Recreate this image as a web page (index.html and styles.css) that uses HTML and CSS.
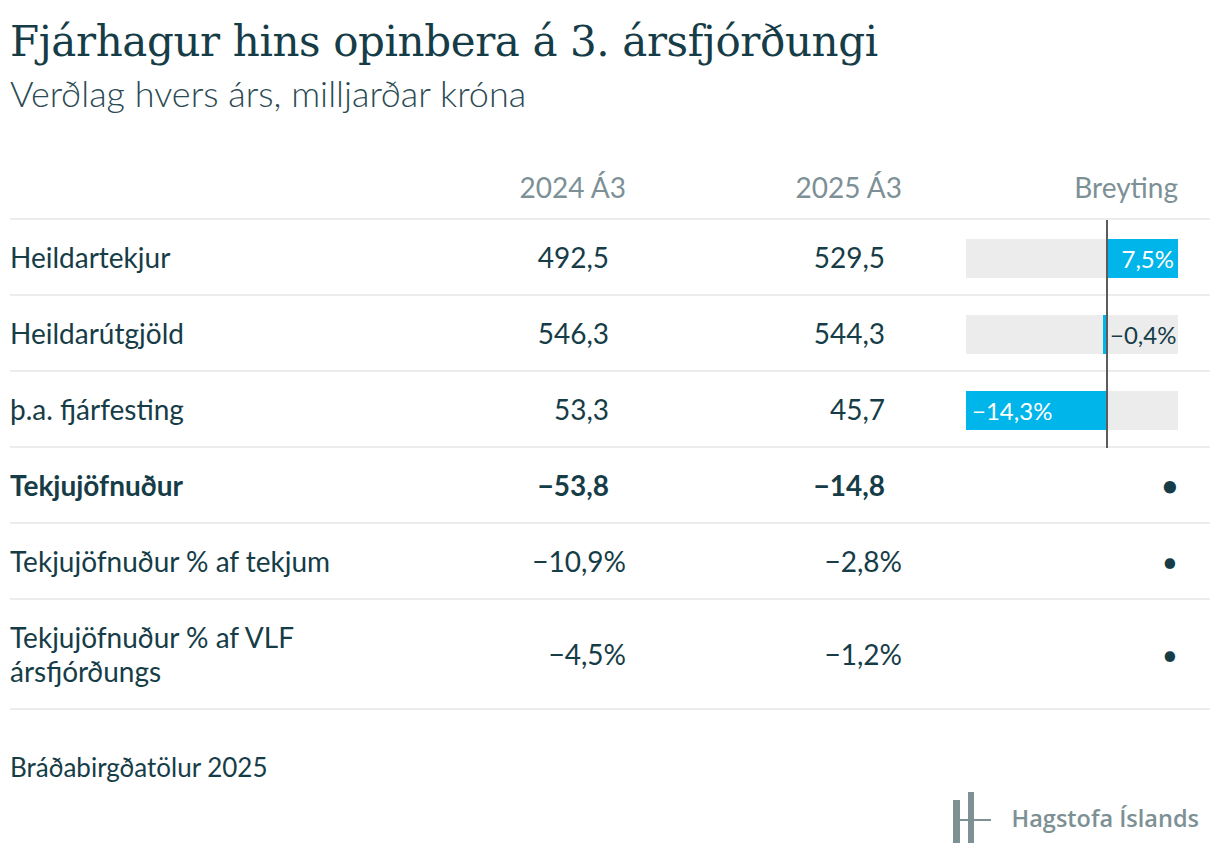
FILE: index.html
```html
<!DOCTYPE html>
<html lang="is">
<head>
<meta charset="utf-8">
<title>Fjárhagur hins opinbera á 3. ársfjórðungi</title>
<link rel="stylesheet" href="styles.css">
</head>
<body>
<div class="chart">
  <header class="head">
    <h1 class="title">Fjárhagur hins opinbera á 3. ársfjórðungi</h1>
    <p class="subtitle">Verðlag hvers árs, milljarðar króna</p>
  </header>

  <div class="table">
    <div class="row row-head">
      <span class="label"></span>
      <span class="num">2024 Á3</span>
      <span class="num">2025 Á3</span>
      <span class="chg">Breyting</span>
    </div>

    <div class="row">
      <span class="label">Heildartekjur</span>
      <span class="num"><span class="plain">492,5</span></span>
      <span class="num"><span class="plain">529,5</span></span>
      <div class="barcell">
        <div class="track">
          <div class="side side-neg"></div>
          <div class="side side-pos"><div class="bar bar-right" style="width:71px">7,5%</div></div>
        </div>
        <span class="axis"></span>
      </div>
    </div>

    <div class="row">
      <span class="label">Heildarútgjöld</span>
      <span class="num"><span class="plain">546,3</span></span>
      <span class="num"><span class="plain">544,3</span></span>
      <div class="barcell">
        <div class="track">
          <div class="side side-neg"><div class="bar" style="width:4px"></div></div>
          <div class="side side-pos"><span class="outside">−0,4%</span></div>
        </div>
        <span class="axis"></span>
      </div>
    </div>

    <div class="row">
      <span class="label">þ.a. fjárfesting</span>
      <span class="num"><span class="plain">53,3</span></span>
      <span class="num"><span class="plain">45,7</span></span>
      <div class="barcell">
        <div class="track">
          <div class="side side-neg"><div class="bar bar-left" style="width:141px">−14,3%</div></div>
          <div class="side side-pos"></div>
        </div>
        <span class="axis"></span>
      </div>
    </div>

    <div class="row row-bold">
      <span class="label">Tekjujöfnuður</span>
      <span class="num"><span class="plain">−53,8</span></span>
      <span class="num"><span class="plain">−14,8</span></span>
      <span class="chg dot">•</span>
    </div>

    <div class="row">
      <span class="label">Tekjujöfnuður % af tekjum</span>
      <span class="num">−10,9%</span>
      <span class="num">−2,8%</span>
      <span class="chg dot">•</span>
    </div>

    <div class="row">
      <span class="label">Tekjujöfnuður % af VLF ársfjórðungs</span>
      <span class="num">−4,5%</span>
      <span class="num">−1,2%</span>
      <span class="chg dot">•</span>
    </div>
  </div>

  <p class="note">Bráðabirgðatölur 2025</p>

  <footer class="foot">
    <div class="logo">
      <svg class="logo-mark" width="38" height="52" viewBox="0 0 38 52" aria-hidden="true">
        <rect x="0" y="8" width="7" height="43" fill="#7d9094"/>
        <rect x="15" y="0" width="6" height="51" fill="#7d9094"/>
        <rect x="0" y="27" width="38" height="2" fill="#7d9094"/>
      </svg>
      <span class="logo-text">Hagstofa Íslands</span>
    </div>
  </footer>
</div>
</body>
</html>
```

FILE: styles.css
```css
* { box-sizing: border-box; }

html, body {
  margin: 0;
  padding: 0;
  background: #ffffff;
}

body {
  font-family: Lato, "Noto Sans", sans-serif;
  color: #163d47;
}

.chart {
  width: 1220px;
  padding: 17px 10px 0 10px;
}

.title {
  margin: 0;
  font-family: "DejaVu Serif", "Liberation Serif", serif;
  font-weight: 400;
  font-size: 42px;
  line-height: 50px;
  letter-spacing: -0.4px;
  color: #163d47;
}

.subtitle {
  margin: 4px 0 0 0;
  font-family: Lato, sans-serif;
  font-weight: 300;
  font-size: 36px;
  line-height: 44px;
  color: #2b4a53;
}

.table {
  margin-top: 55px;
  width: 1200px;
}

.row {
  display: grid;
  grid-template-columns: 340px 276px 276px 276px;
  align-items: center;
  padding: 20px 32px 20px 0;
  border-bottom: 2px solid #ececec;
  font-size: 28px;
  line-height: 34px;
}

.row-head {
  padding-top: 0;
  padding-bottom: 14px;
  color: #7c9096;
}

.row-bold {
  font-weight: 700;
}

.label {
  padding-right: 10px;
}

.num {
  text-align: right;
}

.plain {
  padding-right: 17px;
}

.chg {
  text-align: right;
}

.dot {
  font-size: 28px;
}

.barcell {
  position: relative;
  align-self: stretch;
  margin: -20px 0 -22px 0;
  display: flex;
  justify-content: flex-end;
  align-items: center;
}

.track {
  display: grid;
  grid-template-columns: 141px 71px;
  width: 212px;
  height: 39px;
  background: #ececec;
}

.side {
  display: flex;
  align-items: stretch;
}

.side-neg {
  justify-content: flex-end;
}

.side-pos {
  justify-content: flex-start;
}

.bar {
  background: #00b5e9;
  color: #ffffff;
  font-size: 24px;
  line-height: 39px;
  white-space: nowrap;
}

.bar-right {
  text-align: right;
  padding-right: 4px;
}

.bar-left {
  text-align: left;
  padding-left: 6px;
}

.outside {
  font-size: 24px;
  line-height: 39px;
  padding-left: 3px;
  white-space: nowrap;
  color: #163d47;
}

.axis {
  position: absolute;
  left: 204px;
  top: 0;
  bottom: 0;
  width: 2px;
  background: #5c5c5c;
}

.note {
  margin: 41px 0 0 0;
  font-size: 26px;
  line-height: 32px;
  color: #163d47;
}

.foot {
  display: flex;
  justify-content: flex-end;
  padding-right: 11px;
  margin-top: 9px;
}

.logo {
  display: flex;
  align-items: center;
  gap: 21px;
}

.logo-mark {
  display: block;
}

.logo-text {
  font-family: "Open Sans", Lato, sans-serif;
  font-weight: 600;
  font-size: 23.5px;
  color: #7d9094;
}
```
